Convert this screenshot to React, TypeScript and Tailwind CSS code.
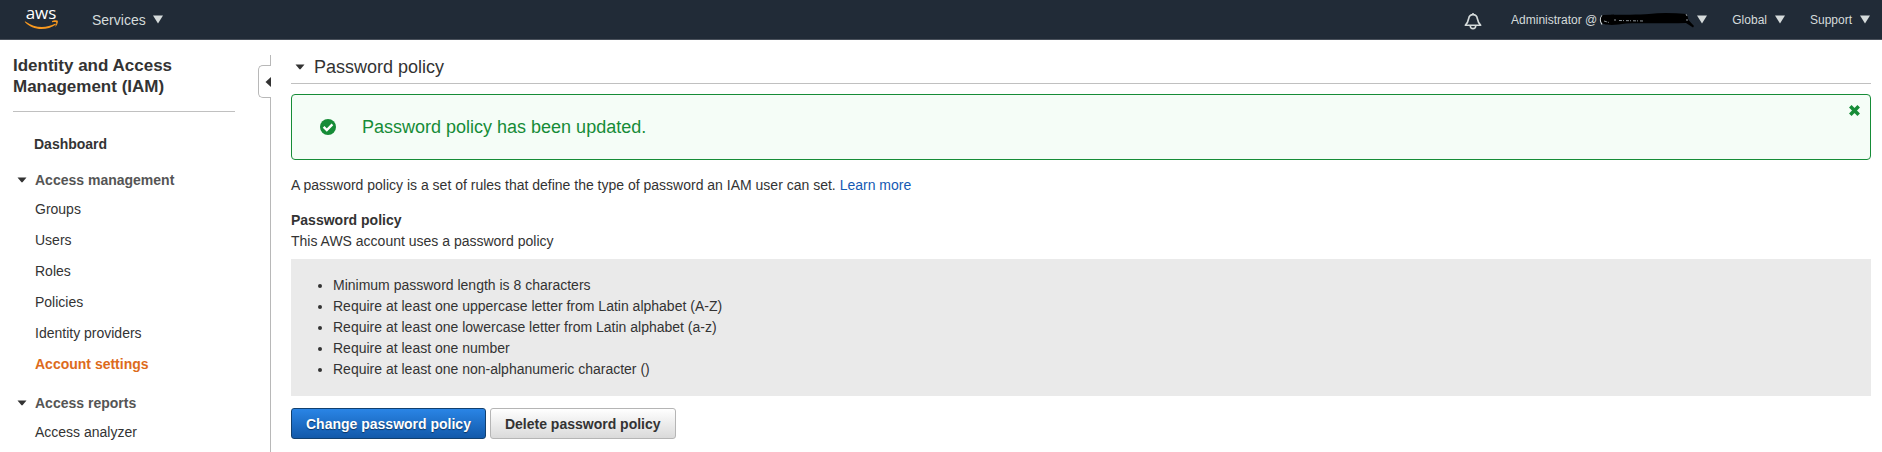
import type { ReactNode } from "react";

const reportLinks = ["Access analyzer"];
const managementLinks = ["Groups", "Users", "Roles", "Policies", "Identity providers", "Account settings"];
const rules = [
  "Minimum password length is 8 characters",
  "Require at least one uppercase letter from Latin alphabet (A-Z)",
  "Require at least one lowercase letter from Latin alphabet (a-z)",
  "Require at least one number",
  "Require at least one non-alphanumeric character ()",
];

function Logo() {
  return (
    <svg viewBox="0 0 36 39" className="h-[39px] w-9" role="img" aria-label="AWS home">
      <text x="17" y="19" textAnchor="middle" fill="#ffffff" className="font-['Open_Sans',sans-serif] text-[17px] font-medium">aws</text>
      <g transform="translate(0 7)" fill="#f7981f">
        <path d="M1.500 14.500C7 18.300 12 20 18 20c4.500 0 9.500-1.200 13-3.200.7-.4 1.300.4.6 1C28 20.600 22.500 22 17.500 22 11 22 5 19.300 1 15.200c-.5-.5 0-1 .5-.7z" />
        <path d="M28 14.200c1.800-1.300 5.200-1 5.700-.4.500.6-.2 4.200-2 5.700-.3.200-.6.100-.4-.3.500-1.100 1.300-3.200.9-3.800-.4-.5-2.700-.3-3.900-.1-.4 0-.5-.3-.3-.6z" />
      </g>
    </svg>
  );
}

function NavArrow() {
  return (
    <svg viewBox="0 0 10 9" className="h-[9px] w-[10px]" aria-hidden="true">
      <path d="M0 .5h10L5 8.500z" fill="#d5dbdb" />
    </svg>
  );
}

function Caret() {
  return (
    <svg viewBox="0 0 10 6" className="h-[6px] w-[10px] shrink-0" aria-hidden="true">
      <path d="M.5 .5h9L5.700 5q-.7.8-1.400 0z" fill="#333333" />
    </svg>
  );
}

function Redaction() {
  return (
    <svg viewBox="0 0 96 20" className="h-5 w-24" aria-hidden="true">
      <path d="M3 5.500q-3 4.500 0 9" fill="none" stroke="#d5dbdb" strokeWidth="1.300" />
      <path d="M4 5C25 4.500 40 5 50 4c12-1.500 25-1 38 0l1.500 6 5.500 6-1 1.500-7-4.500c-20 .5-45 0-60 .5-9 1.500-17 2-22 .5C1 13 1 7 4 5z" fill="#000000" />
      <path d="M5 11l5 1.500M15 10h2M20 10.500l24 .5" stroke="#8f969b" strokeWidth="1" strokeDasharray="3 1 1 2" fill="none" />
      <path d="M87 4l1 2M88 9v2" stroke="#8f969b" strokeWidth="1" fill="none" />
    </svg>
  );
}

function NavGroup({ title, children }: { title: string; children: ReactNode }) {
  return (
    <section>
      <button type="button" className="flex h-7 items-center gap-2 pl-1 font-bold text-[#555555]">
        <Caret />
        {title}
      </button>
      <ul>{children}</ul>
    </section>
  );
}

function NavItem({ label, active = false }: { label: string; active?: boolean }) {
  return (
    <li>
      <a href="#" className={active ? "block py-[5px] pl-[22px] leading-[21px] font-bold text-[#dd6b1c]" : "block py-[5px] pl-[22px] leading-[21px]"}>
        {label}
      </a>
    </li>
  );
}

export default function App() {
  return (
    <div className="flex min-h-screen flex-col bg-white font-['Liberation_Sans',Arial,sans-serif] text-sm text-[#333333]">
      <header className="flex h-10 items-center justify-between border-b border-[#4a515b] bg-[#212b37] pr-3 pl-6 text-[#d5dbdb]">
        <div className="flex items-center gap-8">
          <a href="#"><Logo /></a>
          <button type="button" className="flex items-center gap-[7px]">Services <NavArrow /></button>
        </div>
        <div className="flex items-center text-xs">
          <button type="button" aria-label="Notifications" className="mr-[29px] pt-[2px]">
            <svg viewBox="0 0 18 18" className="h-[18px] w-[18px]" fill="none" stroke="#d5dbdb" strokeWidth="1.600" strokeLinejoin="round">
              <path d="M9 1v1.500M1.300 13.200h15.400C14 10.500 13.800 9.500 13.300 6.500 12.900 4 11.500 2.600 9 2.600S5.100 4 4.700 6.500C4.200 9.500 4 10.500 1.300 13.200z" />
              <path d="M6.300 14c.2 3.500 5.200 3.500 5.400 0" />
            </svg>
          </button>
          <button type="button" className="mr-[25px] flex items-center gap-[2px]">Administrator @ <Redaction /><NavArrow /></button>
          <button type="button" className="mr-[25px] flex items-center gap-2">Global <NavArrow /></button>
          <button type="button" className="flex items-center gap-2">Support <NavArrow /></button>
        </div>
      </header>

      <div className="flex flex-1">
        <nav className="w-[258px] shrink-0 pt-[15px] pr-[23px] pl-[13px]">
          <h2 className="border-b border-[#c0c0c0] pb-[14px] text-[17px] leading-[21px] font-bold">Identity and Access Management (IAM)</h2>
          <a href="#" className="mt-[22px] mb-[11px] block pl-[21px] leading-[21px] font-bold">Dashboard</a>
          <NavGroup title="Access management">
            {managementLinks.map((label) => (
              <NavItem key={label} label={label} active={label === "Account settings"} />
            ))}
          </NavGroup>
          <div className="mt-[9px]">
            <NavGroup title="Access reports">
              {reportLinks.map((label) => <NavItem key={label} label={label} />)}
            </NavGroup>
          </div>
        </nav>

        <div className="flex w-[13px] shrink-0 flex-col pt-[15px]">
          <div className="h-[10px] border-r border-[#b8b8b8]" />
          <button type="button" aria-label="Collapse navigation" className="flex h-[33px] items-center justify-end rounded-l-[5px] border border-r-0 border-[#b8b8b8]">
            <svg viewBox="0 0 6 10" className="h-[10px] w-[6px]"><path d="M6 0v10L.500 5z" fill="#333333" /></svg>
          </button>
          <div className="flex-1 border-r border-[#b8b8b8]" />
        </div>

        <main className="min-w-0 flex-1 pr-[11px] pl-5">
          <h1 className="flex h-11 items-center border-b border-[#c0c0c0] pt-[10px] pl-1 text-lg">
            <button type="button" className="flex items-center gap-[9px]"><Caret />Password policy</button>
          </h1>
          <div role="status" className="mt-[10px] flex h-[66px] items-center rounded-[4px] border border-[#168c37] bg-[#f5fdf7] pl-7 text-lg text-[#168c37]">
            <svg viewBox="0 0 16 16" className="h-4 w-4" aria-hidden="true">
              <circle cx="8" cy="8" r="8" fill="#168c37" />
              <path d="M3.600 7.800l3.200 3.200 5.600-5.600" fill="none" stroke="#ffffff" strokeWidth="2.400" />
            </svg>
            <p className="ml-[26px] flex-1">Password policy has been updated.</p>
            <button type="button" aria-label="Dismiss" className="mt-[10px] mr-[10px] self-start">
              <svg viewBox="0 0 11 11" className="h-[11px] w-[11px]"><path d="M1.300 1.300l8.400 8.400M9.700 1.300l-8.400 8.400" stroke="#168c37" strokeWidth="3.600" /></svg>
            </button>
          </div>
          <p className="mt-[15px] leading-[21px]">
            A password policy is a set of rules that define the type of password an IAM user can set.{" "}
            <a href="#" className="text-[#1459b3]">Learn more</a>
          </p>
          <h2 className="mt-[14px] leading-[21px] font-bold">Password policy</h2>
          <p className="leading-[21px]">This AWS account uses a password policy</p>
          <ul className="mt-[7px] list-disc bg-[#eaeaea] py-4 pl-[42px] leading-[21px]">
            {rules.map((rule) => <li key={rule}>{rule}</li>)}
          </ul>
          <div className="mt-3 flex gap-1">
            <button type="button" className="h-[31px] rounded-[3px] border border-[#12406f] bg-linear-to-b from-[#2a85e6] to-[#1259aa] px-[14px] font-bold text-white [text-shadow:0_1px_1px_#0b3563]">Change password policy</button>
            <button type="button" className="h-[31px] rounded-[3px] border border-[#b5b5b5] bg-linear-to-b from-white to-[#dadada] px-[14px] font-bold">Delete password policy</button>
          </div>
        </main>
      </div>
    </div>
  );
}
